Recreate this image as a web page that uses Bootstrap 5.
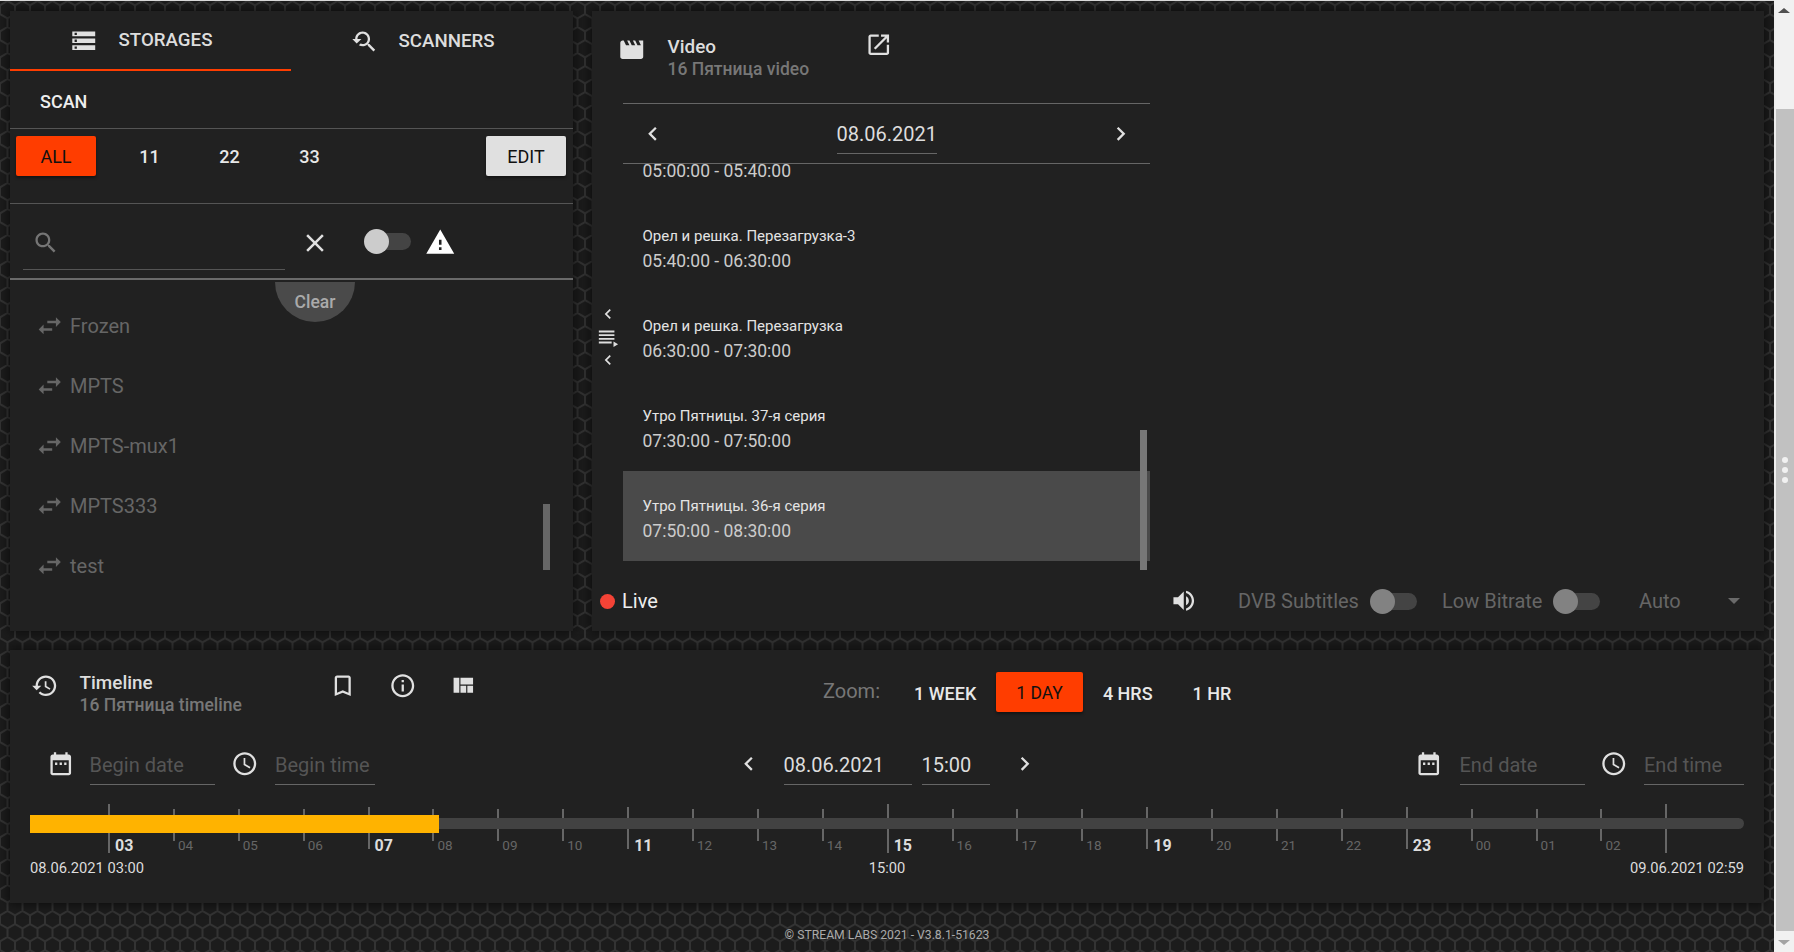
<!doctype html>
<html lang="en">
<head>
<meta charset="utf-8">
<title>Stream Labs</title>
<link rel="stylesheet" href="https://cdn.jsdelivr.net/npm/bootstrap@5.3.0/dist/css/bootstrap.min.css">
<style>
html,body{height:100%;overflow:hidden}
body{font-family:Roboto,"Liberation Sans",sans-serif;background:#1c1c1c;color:#e0e0e0;font-size:16px;line-height:1.2}
.app-main{width:1774px;height:952px;padding-top:1px;background-color:#1c1c1c;background-image:url("data:image/svg+xml,%3Csvg xmlns='http://www.w3.org/2000/svg' width='15' height='26'%3E%3Cpath d='M0 4.33L7.5 0L15 4.33M0 4.33V13M15 4.33V13M0 13L7.5 17.33L15 13M7.5 17.33V26' fill='none' stroke='%23333333' stroke-width='2'/%3E%3C/svg%3E");border-top:1px solid #ddd}
.fake-scroll{width:20px;height:952px;background:#f1f1f1;flex:none}
.sb-arrow-up,.sb-arrow-down{height:20px;display:flex;align-items:center;justify-content:center}
.sb-arrow-up::before{content:"";border:6px solid transparent;border-top:0;border-bottom:5px solid #505050}
.sb-arrow-down::before{content:"";border:6px solid transparent;border-bottom:0;border-top:5px solid #a3a3a3}
.sb-track{height:912px;padding-top:89px;padding-left:2px}
.sb-thumb{height:822px;background:#c1c1c1;position:relative;display:flex;flex-direction:column;align-items:center;padding-top:348px;gap:4px}
.sb-dot{width:6px;height:6px;border-radius:50%;background:#f1f1f1}
.top-row{height:620px;margin-top:9px;margin-left:10px;gap:19px}
.panel-bg{background:#212121;box-shadow:0 0 10px 1px rgba(0,0,0,.6)}
.left-panel{width:563px;position:relative}
.video-panel{width:1172px;position:relative}
svg.ic{width:27.5px;height:27.5px;fill:#e0e0e0;flex:none;display:block}
.tab-item{width:281px;height:60px;font-weight:500;font-size:18.7px;color:#ddd;padding-left:60px;padding-top:1px;gap:21px}
.tab-item.on{border-bottom:2px solid #ff3d00}
.tab-item.off{padding-left:59px}
.scan-row{height:58px;padding-left:30px;padding-top:4px;font-weight:500;font-size:18px;border-bottom:1px solid #555;color:#eee}
.filter-row{height:75px;padding:7px 7px 0 6px;border-bottom:1px solid #555}
.flat-btn{width:80px;height:40px;padding-top:2px;font-weight:500;font-size:18px;color:#e8e8e8;display:flex;align-items:center;justify-content:center;border-radius:2px;flex:none}
.flat-btn.hot{background:#ff3d00;color:#111;font-weight:400;box-shadow:0 2px 3px rgba(0,0,0,.4);margin-right:13.5px}
.flat-btn.lite{background:#e0e0e0;color:#111;font-weight:400;box-shadow:0 2px 3px rgba(0,0,0,.4)}
.search-row{height:76px;border-bottom:2px solid #6a6a6a;position:relative}
.search-field{position:relative;width:262px;height:66px;margin-left:13px;border-bottom:1px solid #555;padding:25px 0 0 9px}
.search-field svg{fill:#757575}
svg.close-ic{width:30px;height:30px;margin-left:15px;margin-top:24px}
.sw{display:block;width:47px;height:25px;position:relative;flex:none}
.sw::before{content:"";position:absolute;left:6px;right:0;top:4px;height:17px;border-radius:9px;background:#444}
.sw::after{content:"";position:absolute;left:0;top:0;width:25px;height:25px;border-radius:50%;background:#ccc}
.sw.dim::after{background:#828282}
.sw-top{margin-left:34px;margin-top:25px}
svg.warn-ic{fill:#fff;margin-left:14px;margin-top:23px;width:30.5px;height:30.5px}
.clear-tab{position:absolute;left:265px;top:271px;width:80px;height:40px;background:#4a4a4a;border-radius:0 0 40px 40px;color:#aaa;font-weight:500;font-size:17.5px;display:flex;align-items:center;justify-content:center;z-index:2}
.src-list{padding-top:16px;position:relative;height:351px}
.src-row{height:60px;color:#666;font-size:20px;padding-left:25px;gap:5.5px;display:flex;align-items:center}
svg.swap-ic{fill:#666;width:29.5px;height:29.5px}
.thin-bar{position:absolute;width:7px;background:#666}
.left-bar{left:533px;top:224px;height:66px}
.vid-body{flex:1 1 auto;min-height:0}
.strip{width:31px;padding-top:293px}
.strip svg{width:20px;height:20px}
.strip svg.pl{width:22px;height:22px;margin:2px 0;fill:#ddd}
.vid-col{width:527px;position:relative}
.vid-head{height:93px;padding-top:25px;border-bottom:1px solid #666}
.head-title{font-weight:500;font-size:18.9px;color:#ddd}
.head-sub{font-weight:500;font-size:17.5px;color:#777}
.head-block{margin-left:22px;width:197px}
.mv-ic{margin-left:-5px}
.ext-ic{margin-top:-5.5px}
.date-row{height:60px;border-bottom:1px solid #666;padding:0 16px 0 16px;display:flex;align-items:center;justify-content:space-between}
.date-box{width:100px;height:40px;padding-top:2px;font-size:20px;color:#ddd;border-bottom:1px solid #666;display:flex;align-items:center;white-space:nowrap}
.prog-list{height:406px;overflow:hidden;position:relative}
.prog-row{height:90px;padding:25px 0 0 19.5px;color:#ddd}
.prog-row:first-child{margin-top:-53px}
.prog-row.sel{background:#4a4a4a}
.prog-title{font-size:15px;line-height:20px;color:#e4e4e4;height:20px}
.prog-time{font-size:17.5px;line-height:20px;margin-top:5px;color:#ccc}
.list-bar{left:517px;top:266px;height:140px;background:#777}
.status-bar{height:40px;padding:0 24px 20px 8px}
.live-dot{width:15px;height:15px;border-radius:50%;background:#f44336;flex:none}
.live-txt{margin-left:7px;font-size:20px;color:#eee}
.muted-lab{color:#666;font-size:20px;white-space:nowrap}
.lab-dvb{margin-left:41px;width:132px}
.lab-low{margin-left:25px;width:111px}
.lab-auto{margin-left:39px;width:89px}
.caret-dn{width:0;height:0;border:6.5px solid transparent;border-bottom:0;border-top:6.5px solid #6a6a6a}
.time-panel{height:253px;margin:19px 10px 0 10px;width:1754px}
.t-head{height:100px;padding:22px 0 0 21px}
.t-head .head-block{margin-left:21px;width:249px}
svg.gap-a{margin-left:32.5px}
.zoom-lab{color:#777;font-size:20px;margin-left:347px;margin-top:7px;width:71px}
.z-btn{height:40px;padding:3px 20px 0;font-size:18px;font-weight:500;color:#e8e8e8;display:flex;align-items:center;border-radius:2px;white-space:nowrap}
.z-btn.hot{background:#ff3d00;color:#111;font-weight:400;font-size:17.5px;box-shadow:0 2px 3px rgba(0,0,0,.4)}
.t-fields{height:35px;padding:0 20px 0 36.5px}
.t-field{height:35px;padding-bottom:5px;border-bottom:1px solid #666;font-size:20px;color:#555;display:flex;align-items:center;white-space:nowrap;flex:none}
.t-field.val{color:#ddd}
.t-fields svg{margin-right:17px}
.t-fields svg.first-cal{margin-right:15.5px}
.fld-bd{width:125px;margin-right:16px}
.fld-bt{width:100px;margin-right:360px}
.fld-vd{width:128px;margin-right:10px}
.fld-vt{width:68px;margin-right:21px}
.fld-ed{width:125px;margin-right:15px}
.fld-et{width:100px}
.t-fields svg.ch-l{margin-right:21px}
.t-fields svg.ch-r{margin-right:0}
.ruler{position:relative;height:49px;margin:19px 20px 0 20px;padding-left:78px;display:flex}
.cell{flex:0 0 64.9px;display:flex;align-items:flex-start}
.tk{width:2px;background:#666;flex:none}
.tk-a{height:49px}
.tk-b{height:42px;margin-top:3px}
.tk-c{height:32px;margin-top:5px}
.lb{margin-top:33px;margin-left:3px;font-size:13.5px;line-height:16px;color:#666}
.lb.bold{font-weight:700;font-size:16px;line-height:18px;color:#ddd;margin-left:5px}
.track{position:absolute;left:0;right:0;top:14px;height:11px;background:#424242;border-radius:0 6px 6px 0}
.played{position:absolute;left:0;width:409px;top:11px;height:18px;background:#ffb300}
.t-range{margin:5px 20px 0 20px;font-size:14.7px;line-height:20px;color:#ddd}
.t-range>span{flex:1 1 0}
.foot{height:48px;padding-top:25px;font-size:12.2px;color:#aaa;text-align:center}
</style>
</head>
<body class="d-flex m-0">
<div class="app-main d-flex flex-column flex-none">
  <div class="d-flex top-row">
    <section class="left-panel panel-bg d-flex flex-column">
      <div class="d-flex">
        <div class="tab-item on d-flex align-items-center"><svg class="ic" viewBox="0 0 24 24"><path d="M2 20h20v-4H2v4zm2-3h2v2H4v-2zM2 4v4h20V4H2zm4 3H4V5h2v2zm-4 7h20v-4H2v4zm2-3h2v2H4v-2z"/></svg><span>STORAGES</span></div>
        <div class="tab-item off d-flex align-items-center"><svg class="ic" viewBox="0 0 24 24"><path d="M17.01 14h-.8l-.27-.27c.98-1.14 1.57-2.61 1.57-4.23 0-3.59-2.91-6.5-6.5-6.5s-6.5 3-6.5 6.5H2l3.84 4 4.16-4H6.51C6.51 7 8.53 5 11.01 5s4.5 2.01 4.5 4.5c0 2.48-2.02 4.5-4.5 4.5-.65 0-1.26-.14-1.82-.38L7.71 15.1c.97.57 2.09.9 3.3.9 1.61 0 3.08-.59 4.22-1.57l.27.27v.79l5.01 5L21.99 19l-4.98-5z"/></svg><span>SCANNERS</span></div>
      </div>
      <div class="scan-row d-flex align-items-center">SCAN</div>
      <div class="filter-row d-flex align-items-start">
        <div class="flat-btn hot">ALL</div><div class="flat-btn">11</div><div class="flat-btn">22</div><div class="flat-btn">33</div>
        <div class="flat-btn lite ms-auto">EDIT</div>
      </div>
      <div class="search-row d-flex align-items-start">
        <div class="search-field"><svg class="ic" viewBox="0 0 24 24"><path d="M15.5 14h-.79l-.28-.27C15.41 12.59 16 11.11 16 9.5 16 5.91 13.09 3 9.5 3S3 5.91 3 9.5 5.91 16 9.5 16c1.61 0 3.09-.59 4.23-1.57l.27.28v.79l5 4.99L20.49 19l-4.99-5zm-6 0C7.01 14 5 11.99 5 9.5S7.01 5 9.5 5 14 7.01 14 9.5 11.99 14 9.5 14z"/></svg></div>
        <svg class="ic close-ic" viewBox="0 0 24 24"><path d="M19 6.41L17.59 5 12 10.59 6.41 5 5 6.41 10.59 12 5 17.59 6.41 19 12 13.41 17.59 19 19 17.59 13.41 12z"/></svg>
        <span class="sw sw-top"></span>
        <svg class="ic warn-ic" viewBox="0 0 24 24"><path d="M1 21h22L12 2 1 21zm12-3h-2v-2h2v2zm0-4h-2v-4h2v4z"/></svg>
      </div>
      <div class="clear-tab">Clear</div>
      <div class="src-list">
        <div class="src-row"><svg class="ic swap-ic" viewBox="0 0 24 24"><path d="M6.99 11L3 15l3.99 4v-3H14v-2H6.99v-3zM21 9l-3.99-4v3H10v2h7.01v3L21 9z"/></svg><span>Frozen</span></div>
        <div class="src-row"><svg class="ic swap-ic" viewBox="0 0 24 24"><path d="M6.99 11L3 15l3.99 4v-3H14v-2H6.99v-3zM21 9l-3.99-4v3H10v2h7.01v3L21 9z"/></svg><span>MPTS</span></div>
        <div class="src-row"><svg class="ic swap-ic" viewBox="0 0 24 24"><path d="M6.99 11L3 15l3.99 4v-3H14v-2H6.99v-3zM21 9l-3.99-4v3H10v2h7.01v3L21 9z"/></svg><span>MPTS-mux1</span></div>
        <div class="src-row"><svg class="ic swap-ic" viewBox="0 0 24 24"><path d="M6.99 11L3 15l3.99 4v-3H14v-2H6.99v-3zM21 9l-3.99-4v3H10v2h7.01v3L21 9z"/></svg><span>MPTS333</span></div>
        <div class="src-row"><svg class="ic swap-ic" viewBox="0 0 24 24"><path d="M6.99 11L3 15l3.99 4v-3H14v-2H6.99v-3zM21 9l-3.99-4v3H10v2h7.01v3L21 9z"/></svg><span>test</span></div>
        <div class="thin-bar left-bar"></div>
      </div>
    </section>
    <section class="video-panel panel-bg d-flex flex-column">
      <div class="vid-body d-flex">
        <div class="strip d-flex flex-column align-items-center">
          <svg class="ic" viewBox="0 0 24 24"><path d="M15.41 7.41L14 6l-6 6 6 6 1.41-1.41L10.83 12z"/></svg>
          <svg class="ic pl" viewBox="0 0 24 24"><path d="M2 5h17v2H2zm0 4h17v2H2zm0 4h17v2H2zm0 4h14v2H2zm16 0v6l5-3z"/></svg>
          <svg class="ic" viewBox="0 0 24 24"><path d="M15.41 7.41L14 6l-6 6 6 6 1.41-1.41L10.83 12z"/></svg>
        </div>
        <div class="vid-col d-flex flex-column">
          <div class="vid-head d-flex align-items-start">
            <svg class="ic mv-ic" viewBox="0 0 24 24"><path d="M18 4l2 4h-3l-2-4h-2l2 4h-3l-2-4H8l2 4H7L5 4H4c-1.1 0-1.99.9-1.99 2L2 18c0 1.1.9 2 2 2h16c1.1 0 2-.9 2-2V4h-4z"/></svg>
            <div class="head-block"><div class="head-title">Video</div><div class="head-sub">16 Пятница video</div></div>
            <svg class="ic ext-ic" viewBox="0 0 24 24"><path d="M19 19H5V5h7V3H5c-1.11 0-2 .9-2 2v14c0 1.1.89 2 2 2h14c1.1 0 2-.9 2-2v-7h-2v7zM14 3v2h3.59l-9.83 9.83 1.41 1.41L19 6.41V10h2V3h-7z"/></svg>
          </div>
          <div class="date-row">
            <svg class="ic" viewBox="0 0 24 24"><path d="M15.41 7.41L14 6l-6 6 6 6 1.41-1.41L10.83 12z"/></svg>
            <div class="date-box">08.06.2021</div>
            <svg class="ic" viewBox="0 0 24 24"><path d="M10 6L8.59 7.41 13.17 12l-4.58 4.59L10 18l6-6z"/></svg>
          </div>
          <div class="prog-list">
            <div class="prog-row"><div class="prog-title"></div><div class="prog-time">05:00:00 - 05:40:00</div></div>
            <div class="prog-row"><div class="prog-title">Орел и решка. Перезагрузка-3</div><div class="prog-time">05:40:00 - 06:30:00</div></div>
            <div class="prog-row"><div class="prog-title">Орел и решка. Перезагрузка</div><div class="prog-time">06:30:00 - 07:30:00</div></div>
            <div class="prog-row"><div class="prog-title">Утро Пятницы. 37-я серия</div><div class="prog-time">07:30:00 - 07:50:00</div></div>
            <div class="prog-row sel"><div class="prog-title">Утро Пятницы. 36-я серия</div><div class="prog-time">07:50:00 - 08:30:00</div></div>
            <div class="thin-bar list-bar"></div>
          </div>
        </div>
      </div>
      <div class="status-bar d-flex align-items-center">
        <span class="live-dot"></span><span class="live-txt">Live</span>
        <svg class="ic ms-auto" viewBox="0 0 24 24"><path d="M3 9v6h4l5 5V4L7 9H3zm13.5 3c0-1.77-1.02-3.29-2.5-4.03v8.05c1.48-.73 2.5-2.25 2.5-4.02zM14 3.23v2.06c2.89.86 5 3.54 5 6.71s-2.11 5.85-5 6.71v2.06c4.01-.91 7-4.49 7-8.77s-2.99-7.86-7-8.77z"/></svg>
        <span class="muted-lab lab-dvb">DVB Subtitles</span><span class="sw dim"></span>
        <span class="muted-lab lab-low">Low Bitrate</span><span class="sw dim"></span>
        <span class="muted-lab lab-auto">Auto</span><span class="caret-dn"></span>
      </div>
    </section>
  </div>
  <section class="time-panel panel-bg d-flex flex-column">
    <div class="t-head d-flex align-items-start">
      <svg class="ic" viewBox="0 0 24 24"><path d="M13 3c-4.97 0-9 4.03-9 9H1l3.89 3.89.07.14L9 12H6c0-3.87 3.13-7 7-7s7 3.13 7 7-3.13 7-7 7c-1.93 0-3.68-.79-4.94-2.06l-1.42 1.42C8.27 19.99 10.51 21 13 21c4.97 0 9-4.03 9-9s-4.03-9-9-9zm-1 5v5l4.28 2.54.72-1.21-3.5-2.08V8H12z"/></svg>
      <div class="head-block"><div class="head-title">Timeline</div><div class="head-sub">16 Пятница timeline</div></div>
      <svg class="ic" viewBox="0 0 24 24"><path d="M17 3H7c-1.1 0-1.99.9-1.99 2L5 21l7-3 7 3V5c0-1.1-.9-2-2-2zm0 15l-5-2.18L7 18V5h10v13z"/></svg>
      <svg class="ic gap-a" viewBox="0 0 24 24"><path d="M11 17h2v-6h-2v6zm1-15C6.48 2 2 6.48 2 12s4.48 10 10 10 10-4.48 10-10S17.52 2 12 2zm0 18c-4.41 0-8-3.59-8-8s3.59-8 8-8 8 3.59 8 8-3.59 8-8 8zm-1-11h2V7h-2v2z"/></svg>
      <svg class="ic gap-a" viewBox="0 0 24 24"><path d="M10 18h5v-6h-5v6zm-6 0h5V5H4v13zm12 0h5v-6h-5v6zM10 5v6h11V5H10z"/></svg>
      <span class="zoom-lab">Zoom:</span>
      <div class="z-btn">1 WEEK</div><div class="z-btn hot">1 DAY</div><div class="z-btn">4 HRS</div><div class="z-btn">1 HR</div>
    </div>
    <div class="t-fields d-flex align-items-start">
      <svg class="ic first-cal" viewBox="0 0 24 24"><path d="M9 11H7v2h2v-2zm4 0h-2v2h2v-2zm4 0h-2v2h2v-2zm2-7h-1V2h-2v2H8V2H6v2H5c-1.11 0-1.99.9-1.99 2L3 20c0 1.1.89 2 2 2h14c1.1 0 2-.9 2-2V6c0-1.1-.9-2-2-2zm0 16H5V9h14v11z"/></svg>
      <div class="t-field fld-bd">Begin date</div>
      <svg class="ic" viewBox="0 0 24 24"><path d="M11.99 2C6.47 2 2 6.48 2 12s4.47 10 9.99 10C17.52 22 22 17.52 22 12S17.52 2 11.99 2zM12 20c-4.42 0-8-3.58-8-8s3.58-8 8-8 8 3.58 8 8-3.58 8-8 8zm.5-13H11v6l5.25 3.15.75-1.23-4.5-2.67z"/></svg>
      <div class="t-field fld-bt">Begin time</div>
      <svg class="ic ch-l" viewBox="0 0 24 24"><path d="M15.41 7.41L14 6l-6 6 6 6 1.41-1.41L10.83 12z"/></svg>
      <div class="t-field val fld-vd">08.06.2021</div>
      <div class="t-field val fld-vt">15:00</div>
      <svg class="ic ch-r" viewBox="0 0 24 24"><path d="M10 6L8.59 7.41 13.17 12l-4.58 4.59L10 18l6-6z"/></svg>
      <svg class="ic ms-auto" viewBox="0 0 24 24"><path d="M9 11H7v2h2v-2zm4 0h-2v2h2v-2zm4 0h-2v2h2v-2zm2-7h-1V2h-2v2H8V2H6v2H5c-1.11 0-1.99.9-1.99 2L3 20c0 1.1.89 2 2 2h14c1.1 0 2-.9 2-2V6c0-1.1-.9-2-2-2zm0 16H5V9h14v11z"/></svg>
      <div class="t-field fld-ed">End date</div>
      <svg class="ic" viewBox="0 0 24 24"><path d="M11.99 2C6.47 2 2 6.48 2 12s4.47 10 9.99 10C17.52 22 22 17.52 22 12S17.52 2 11.99 2zM12 20c-4.42 0-8-3.58-8-8s3.58-8 8-8 8 3.58 8 8-3.58 8-8 8zm.5-13H11v6l5.25 3.15.75-1.23-4.5-2.67z"/></svg>
      <div class="t-field fld-et">End time</div>
    </div>
    <div class="ruler">
      <div class="cell"><i class="tk tk-a"></i><span class="lb bold">03</span></div>
      <div class="cell"><i class="tk tk-c"></i><span class="lb">04</span></div>
      <div class="cell"><i class="tk tk-c"></i><span class="lb">05</span></div>
      <div class="cell"><i class="tk tk-c"></i><span class="lb">06</span></div>
      <div class="cell"><i class="tk tk-b"></i><span class="lb bold">07</span></div>
      <div class="cell"><i class="tk tk-c"></i><span class="lb">08</span></div>
      <div class="cell"><i class="tk tk-c"></i><span class="lb">09</span></div>
      <div class="cell"><i class="tk tk-c"></i><span class="lb">10</span></div>
      <div class="cell"><i class="tk tk-b"></i><span class="lb bold">11</span></div>
      <div class="cell"><i class="tk tk-c"></i><span class="lb">12</span></div>
      <div class="cell"><i class="tk tk-c"></i><span class="lb">13</span></div>
      <div class="cell"><i class="tk tk-c"></i><span class="lb">14</span></div>
      <div class="cell"><i class="tk tk-a"></i><span class="lb bold">15</span></div>
      <div class="cell"><i class="tk tk-c"></i><span class="lb">16</span></div>
      <div class="cell"><i class="tk tk-c"></i><span class="lb">17</span></div>
      <div class="cell"><i class="tk tk-c"></i><span class="lb">18</span></div>
      <div class="cell"><i class="tk tk-b"></i><span class="lb bold">19</span></div>
      <div class="cell"><i class="tk tk-c"></i><span class="lb">20</span></div>
      <div class="cell"><i class="tk tk-c"></i><span class="lb">21</span></div>
      <div class="cell"><i class="tk tk-c"></i><span class="lb">22</span></div>
      <div class="cell"><i class="tk tk-b"></i><span class="lb bold">23</span></div>
      <div class="cell"><i class="tk tk-c"></i><span class="lb">00</span></div>
      <div class="cell"><i class="tk tk-c"></i><span class="lb">01</span></div>
      <div class="cell"><i class="tk tk-c"></i><span class="lb">02</span></div>
      <div class="cell"><i class="tk tk-a"></i></div>
      <div class="track"></div>
      <div class="played"></div>
    </div>
    <div class="t-range d-flex">
      <span>08.06.2021 03:00</span><span class="text-center">15:00</span><span class="text-end">09.06.2021 02:59</span>
    </div>
  </section>
  <footer class="foot">© STREAM LABS 2021 - V3.8.1-51623</footer>
</div>
<div class="fake-scroll">
  <div class="sb-arrow-up"></div>
  <div class="sb-track"><div class="sb-thumb"><span class="sb-dot"></span><span class="sb-dot"></span><span class="sb-dot"></span></div></div>
  <div class="sb-arrow-down"></div>
</div>
<script src="https://cdn.jsdelivr.net/npm/bootstrap@5.3.0/dist/js/bootstrap.bundle.min.js"></script>
</body>
</html>
